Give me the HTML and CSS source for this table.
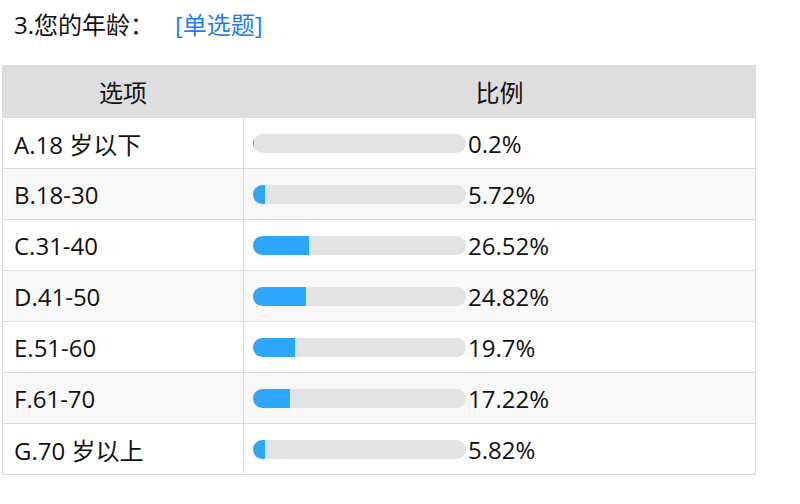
FILE: index.html
```html
<!DOCTYPE html>
<html lang="zh">
<head>
<meta charset="utf-8">
<link rel="stylesheet" href="styles.css">
</head>
<body>
<div class="title"><span class="q">3.您的年龄：</span><span class="type">[单选题]</span></div>
<table class="tbl">
  <thead>
    <tr><th class="c1">选项</th><th class="c2">比例</th></tr>
  </thead>
  <tbody>
    <tr><td>A.18 岁以下</td><td><div class="cell"><div class="bar"><div class="fill" style="width:0.2%"></div></div><span class="pct">0.2%</span></div></td></tr>
    <tr><td>B.18-30</td><td><div class="cell"><div class="bar"><div class="fill" style="width:5.72%"></div></div><span class="pct">5.72%</span></div></td></tr>
    <tr><td>C.31-40</td><td><div class="cell"><div class="bar"><div class="fill" style="width:26.52%"></div></div><span class="pct">26.52%</span></div></td></tr>
    <tr><td>D.41-50</td><td><div class="cell"><div class="bar"><div class="fill" style="width:24.82%"></div></div><span class="pct">24.82%</span></div></td></tr>
    <tr><td>E.51-60</td><td><div class="cell"><div class="bar"><div class="fill" style="width:19.7%"></div></div><span class="pct">19.7%</span></div></td></tr>
    <tr><td>F.61-70</td><td><div class="cell"><div class="bar"><div class="fill" style="width:17.22%"></div></div><span class="pct">17.22%</span></div></td></tr>
    <tr><td>G.70 岁以上</td><td><div class="cell"><div class="bar"><div class="fill" style="width:5.82%"></div></div><span class="pct">5.82%</span></div></td></tr>
  </tbody>
</table>
</body>
</html>
```
FILE: styles.css
```css
html, body {
  margin: 0;
  padding: 0;
  background: #fff;
}
body {
  font-family: "Open Sans", "Noto Sans CJK SC", sans-serif;
  color: #111;
  font-size: 24px;
}
.title {
  display: flex;
  align-items: center;
  height: 46px;
  padding-left: 14px;
}
.title .q {
  width: 161px;
}
.title .type {
  color: #1e7ef0;
}
.tbl {
  margin: 19px 0 0 2px;
  width: 754px;
  border-collapse: collapse;
  border: 1px solid #dcdcdc;
}
.tbl th {
  background: #dedede;
  font-weight: normal;
  height: 51px;
  padding: 0;
  border: 1px solid #dcdcdc;
  text-align: center;
}
.tbl th.c1 {
  width: 240px;
}
.tbl td {
  height: 50px;
  padding: 0 0 0 11px;
  border: 1px solid #dcdcdc;
}
.tbl td + td {
  padding-left: 9px;
}
.tbl tbody tr:nth-child(even) td {
  background: #f8f8f8;
}
.cell {
  display: flex;
  align-items: center;
}
.bar {
  width: 213px;
  height: 19px;
  border-radius: 10px;
  background: #e3e3e5;
  overflow: hidden;
  flex: none;
}
.fill {
  height: 100%;
  background: #2ea6fb;
}
.pct {
  margin-left: 2px;
}
```
